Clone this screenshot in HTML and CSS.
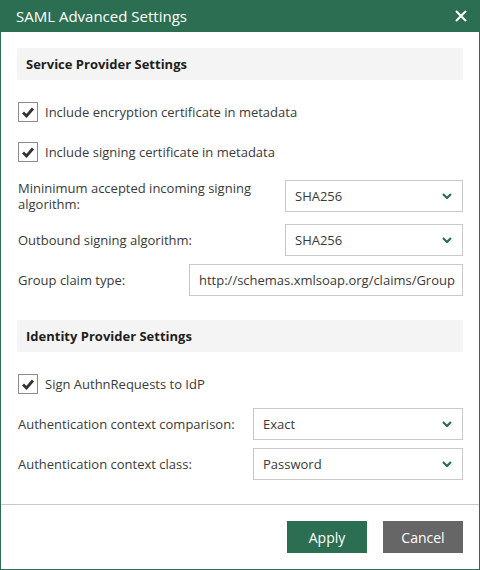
FILE: index.html
```html
<!DOCTYPE html>
<html lang="en">
<head>
  <meta charset="UTF-8" />
  <meta name="viewport" content="width=device-width, initial-scale=1" />
  <title>SAML Advanced Settings</title>
  <link rel="stylesheet" href="styles.css">
</head>
<body>

<div class="dialog">
  <div class="titlebar">
    <span class="title">SAML Advanced Settings</span>
    <svg class="close" width="12" height="12" viewBox="0 0 12 12">
      <path d="M1 1L11 11M11 1L1 11" stroke="#fff" stroke-width="2" fill="none" />
    </svg>
  </div>

  <div class="content">
    <!-- Service provider -->
    <div class="section-head">Service Provider Settings</div>

    <label class="check first">
      <span class="box"><svg width="14" height="12" viewBox="0 0 14 12"><path d="M2 6.5L5.5 10L12 2.5" stroke="#333" stroke-width="2.8" fill="none" /></svg></span>
      Include encryption certificate in metadata
    </label>
    <label class="check">
      <span class="box"><svg width="14" height="12" viewBox="0 0 14 12"><path d="M2 6.5L5.5 10L12 2.5" stroke="#333" stroke-width="2.8" fill="none" /></svg></span>
      Include signing certificate in metadata
    </label>

    <div class="field f-min">
      <div class="label">Mininimum accepted incoming signing algorithm:</div>
      <div class="select w-178">SHA256 <svg class="chev" width="10" height="6" viewBox="0 0 10 6"><path d="M1 1L5 5L9 1" stroke="#2b6e51" stroke-width="2.2" fill="none" /></svg></div>
    </div>
    <div class="field f-out">
      <div class="label">Outbound signing algorithm:</div>
      <div class="select w-178">SHA256 <svg class="chev" width="10" height="6" viewBox="0 0 10 6"><path d="M1 1L5 5L9 1" stroke="#2b6e51" stroke-width="2.2" fill="none" /></svg></div>
    </div>
    <div class="field f-group">
      <div class="label">Group claim type:</div>
      <div class="input w-274">http://schemas.xmlsoap.org/claims/Group</div>
    </div>

    <!-- Identity provider -->
    <div class="section-head second">Identity Provider Settings</div>

    <label class="check first">
      <span class="box"><svg width="14" height="12" viewBox="0 0 14 12"><path d="M2 6.5L5.5 10L12 2.5" stroke="#333" stroke-width="2.8" fill="none" /></svg></span>
      Sign AuthnRequests to IdP
    </label>

    <div class="field f-cmp">
      <div class="label">Authentication context comparison:</div>
      <div class="select w-210">Exact <svg class="chev" width="10" height="6" viewBox="0 0 10 6"><path d="M1 1L5 5L9 1" stroke="#2b6e51" stroke-width="2.2" fill="none" /></svg></div>
    </div>
    <div class="field f-cls">
      <div class="label">Authentication context class:</div>
      <div class="select w-210">Password <svg class="chev" width="10" height="6" viewBox="0 0 10 6"><path d="M1 1L5 5L9 1" stroke="#2b6e51" stroke-width="2.2" fill="none" /></svg></div>
    </div>
  </div>

  <div class="footer">
    <button class="btn apply">Apply</button>
    <button class="btn cancel">Cancel</button>
  </div>
</div>

</body>
</html>
```

FILE: styles.css
```css
body {
  margin: 0;
  background: #fff;
  font-family: "Open Sans", "Liberation Sans", sans-serif;
  font-size: 13px;
  color: #3a3a3a;
}
.dialog {
  width: 480px;
  height: 570px;
  box-sizing: border-box;
  border: 1px solid #2b6e51;
  border-top: none;
  display: flex;
  flex-direction: column;
}
.titlebar {
  height: 32px;
  flex: none;
  margin: 0 -1px;
  background: #2b6e51;
  color: #fff;
  display: flex;
  align-items: center;
  justify-content: space-between;
  padding: 0 13px 0 16px;
}
.title {
  font-size: 15px;
}
.close {
  display: block;
}
.content {
  flex: 1;
  padding: 0 16px;
}
.section-head {
  margin-top: 16px;
  height: 32px;
  background: #f4f4f4;
  display: flex;
  align-items: center;
  padding-left: 9px;
  font-weight: bold;
  color: #1e1e1e;
}
.section-head.second {
  margin-top: 24px;
}
.check {
  display: flex;
  align-items: center;
  height: 20px;
  margin-top: 20px;
  padding-left: 1px;
}
.check.first {
  margin-top: 22px;
}
.box {
  width: 18px;
  height: 18px;
  border: 1px solid #8a8a8a;
  margin-right: 7px;
  display: flex;
  align-items: center;
  justify-content: center;
}
.field {
  display: flex;
  align-items: center;
  margin-top: 8px;
}
.f-min { margin-top: 18px; }
.f-out { margin-top: 12px; }
.f-cmp { margin-top: 14px; }
.label {
  flex: 1;
  padding-left: 1px;
  line-height: 16px;
}
.f-min .label {
  padding-right: 20px;
}
.select, .input {
  height: 32px;
  box-sizing: border-box;
  border: 1px solid #c8c8c8;
  display: flex;
  align-items: center;
  justify-content: space-between;
  padding: 0 10px 0 9px;
  white-space: nowrap;
}
.w-178 { width: 178px; }
.w-210 { width: 210px; }
.w-274 { width: 274px; }
.chev {
  display: block;
}
.footer {
  height: 65px;
  flex: none;
  box-sizing: border-box;
  border-top: 1px solid #c8c8c8;
  display: flex;
  justify-content: flex-end;
  align-items: flex-start;
  gap: 16px;
  padding: 16px 16px 0 0;
}
.btn {
  width: 80px;
  height: 32px;
  border: none;
  color: #fff;
  font-family: inherit;
  font-size: 14px;
  cursor: pointer;
}
.apply {
  background: #2b6e51;
}
.cancel {
  background: #666;
}
```
